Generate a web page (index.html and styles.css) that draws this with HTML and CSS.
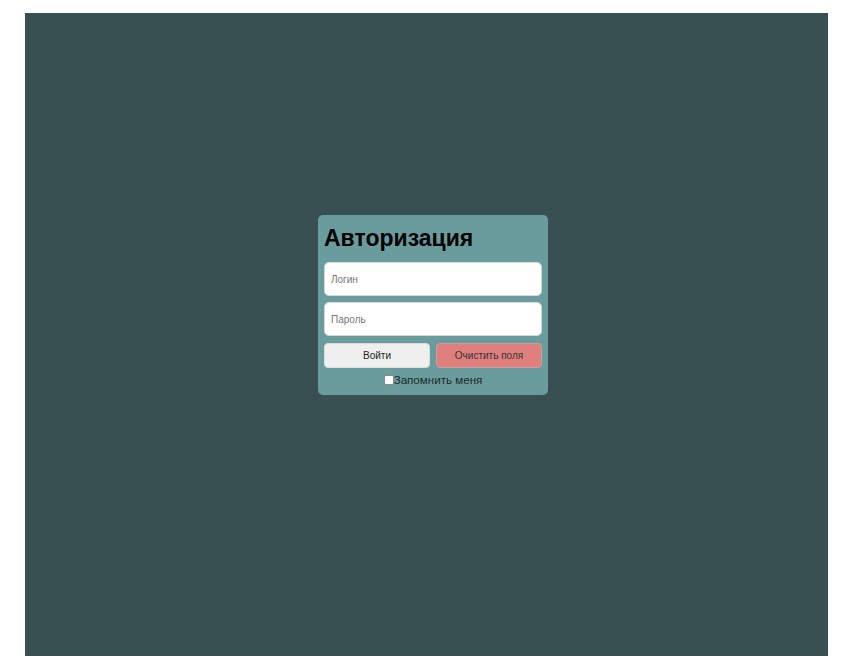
FILE: index.html
```
<!DOCTYPE html>
<html lang="ru">
<head>
<meta charset="utf-8">
<title>Авторизация</title>
<link rel="stylesheet" href="styles.css">
</head>
<body>
<div class="screen">
  <form class="card">
    <h1 class="title">Авторизация</h1>
    <input class="field" type="text" placeholder="Логин">
    <input class="field" type="password" placeholder="Пароль">
    <div class="actions">
      <button class="btn btn-login" type="button">Войти</button>
      <button class="btn btn-clear" type="button">Очистить поля</button>
    </div>
    <label class="remember"><span class="box"></span>Запомнить меня</label>
  </form>
</div>
</body>
</html>
```

FILE: styles.css
```
html, body {
  margin: 0;
  padding: 0;
  background: #ffffff;
}
body {
  font-family: "Liberation Sans", Arial, sans-serif;
}
.screen {
  margin: 13px 24px 10px 25px;
  height: 643px;
  box-sizing: border-box;
  background: #395052;
  display: flex;
  align-items: flex-start;
  padding: 202px 0 0 293px;
}
.card {
  width: 230px;
  box-sizing: border-box;
  background: #6b9c9d;
  border-radius: 5px;
  padding: 8px 6px 8px;
  display: flex;
  flex-direction: column;
}
.title {
  margin: 0 0 9px;
  font-size: 23px;
  line-height: 30px;
  font-weight: bold;
  color: #000;
}
.field {
  height: 34px;
  box-sizing: border-box;
  border: 1px solid #d8d8d8;
  border-radius: 5px;
  background: #fff;
  padding: 0 6px;
  font-family: "Liberation Sans", Arial, sans-serif;
  font-size: 10px;
  margin-bottom: 6px;
  outline: none;
}
.field::placeholder {
  color: #777;
}
.actions {
  display: flex;
  gap: 6px;
  margin-top: 1px;
}
.btn {
  flex: 1;
  height: 25px;
  border-radius: 4px;
  font-family: "Liberation Sans", Arial, sans-serif;
  font-size: 10px;
  color: #222;
  cursor: pointer;
}
.btn-login {
  background: #efefef;
  border: 1px solid #dcdcdc;
}
.btn-clear {
  background: #e0807e;
  border: 1px solid #c7a09e;
  color: #333;
}
.remember {
  display: flex;
  align-items: center;
  justify-content: center;
  margin-top: 5px;
  font-size: 11.6px;
  color: #1a2a2a;
  line-height: 14px;
}
.box {
  width: 10px;
  height: 10px;
  background: #fff;
  border: 1px solid #888;
  border-radius: 2px;
  box-sizing: border-box;
}
```
